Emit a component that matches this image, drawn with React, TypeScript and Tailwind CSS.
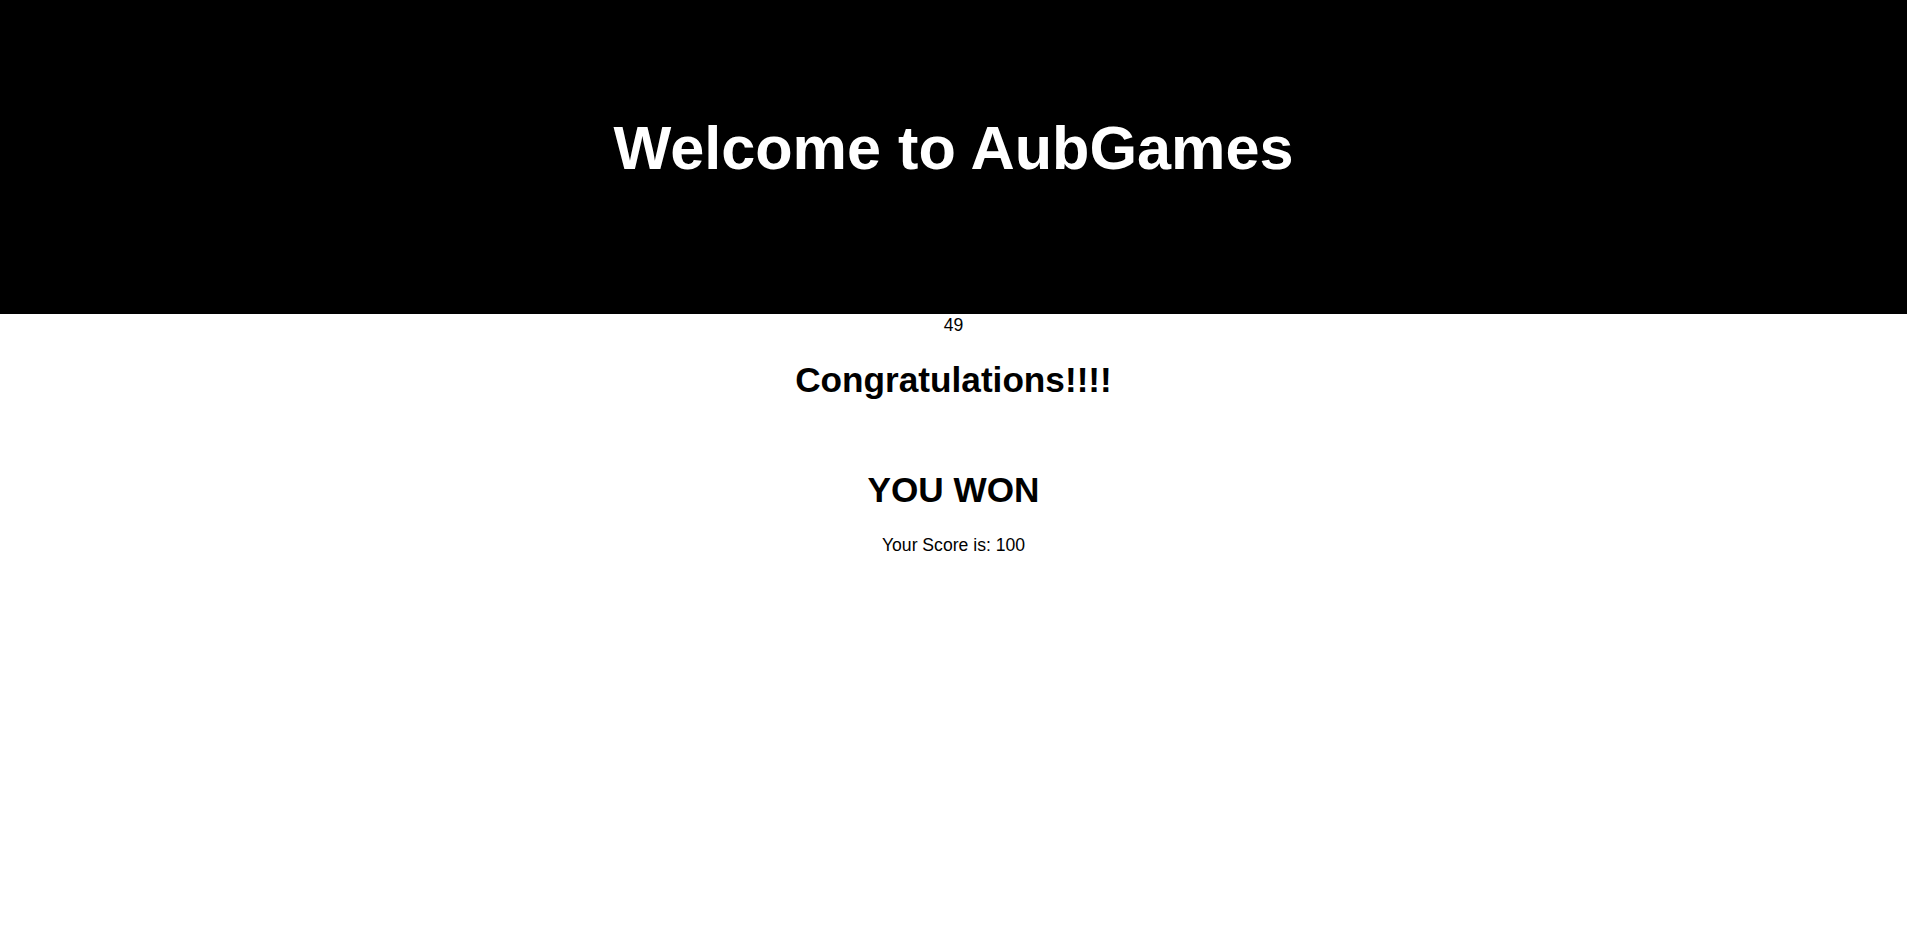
export default function App() {
  return (
    <div className="min-h-[935px] bg-white text-black text-center" style={{ fontFamily: '"Liberation Sans", Arial, sans-serif' }}>
      <header className="bg-black h-[314px] pt-[113px]">
        <h1 className="text-white text-[61.2px] font-bold leading-[70.8px]">Welcome to AubGames</h1>
      </header>
      <div className="mt-[1px] text-[17.6px] leading-[20.2px]">49</div>
      <h1 className="mt-[25px] text-[35.2px] font-bold leading-[40.5px]">Congratulations!!!!</h1>
      <h1 className="mt-[69px] text-[35.2px] font-bold leading-[40.5px]">YOU WON</h1>
      <p className="mt-[25px] text-[17.6px] leading-[20.2px]">Your Score is: 100</p>
    </div>
  );
}
